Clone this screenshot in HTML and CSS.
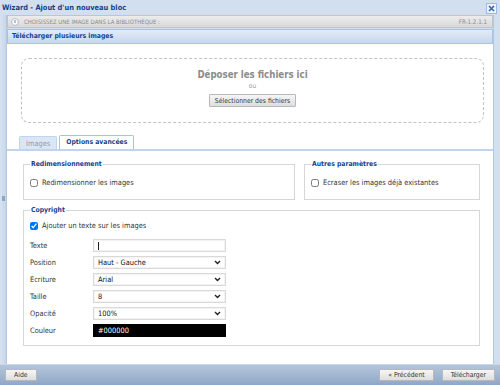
FILE: index.html
```html
<!DOCTYPE html>
<html lang="fr">
<head>
    <meta charset="UTF-8">
    <title>Wizard - Ajout d'un nouveau bloc</title>
    <link rel="stylesheet" href="styles.css">
</head>
<body>
    <div class="window">
        <div class="titlebar">
            <span class="title">Wizard - Ajout d'un nouveau bloc</span>
            <span class="close">
                <svg width="7" height="7" viewBox="0 0 7 7"><path d="M1 1 L6 6 M6 1 L1 6" stroke="#3a64a8" stroke-width="1.6"/></svg>
            </span>
        </div>

        <div class="frame">
            <div class="side-left"><span class="grip"></span></div>
            <div class="center">
                <div class="libbar">
                    <span class="lib-title">
                        <svg class="lib-icon" width="8" height="8" viewBox="0 0 8 8"><circle cx="4" cy="4" r="3.4" fill="#fff" stroke="#9ab0cc" stroke-width="0.8"/><rect x="3.5" y="2" width="1" height="3" fill="#6b88b3"/></svg>
                        CHOISISSEZ UNE IMAGE DANS LA BIBLIOTHÈQUE :
                    </span>
                    <span class="version">FR-1.2.1.1</span>
                </div>

                <div class="panel-header">Télécharger plusieurs images</div>

                <div class="panel-body">
                    <div class="dropzone">
                        <div class="drop-title">Déposer les fichiers ici</div>
                        <div class="drop-or">ou</div>
                        <button class="btn btn-select">Sélectionner des fichiers</button>
                    </div>

                    <div class="tabs">
                        <span class="tab">Images</span>
                        <span class="tab active">Options avancées</span>
                    </div>

                    <div class="options">
                        <div class="row-fieldsets">
                            <fieldset class="group group-resize">
                                <legend>Redimensionnement</legend>
                                <label class="check"><input type="checkbox"> Redimensionner les images</label>
                            </fieldset>
                            <fieldset class="group group-other">
                                <legend>Autres paramètres</legend>
                                <label class="check"><input type="checkbox"> Ecraser les images déjà existantes</label>
                            </fieldset>
                        </div>

                        <fieldset class="group group-copyright">
                            <legend>Copyright</legend>
                            <label class="check"><input type="checkbox" checked> Ajouter un texte sur les images</label>

                            <div class="form-grid">
                                <span class="label">Texte</span>
                                <div class="field text-field"><span class="caret"></span></div>

                                <span class="label">Position</span>
                                <div class="field select">Haut - Gauche<svg class="chev" width="7" height="5" viewBox="0 0 7 5"><path d="M1 1 L3.5 3.5 L6 1" fill="none" stroke="#222" stroke-width="1.4"/></svg></div>

                                <span class="label">Ecriture</span>
                                <div class="field select">Arial<svg class="chev" width="7" height="5" viewBox="0 0 7 5"><path d="M1 1 L3.5 3.5 L6 1" fill="none" stroke="#222" stroke-width="1.4"/></svg></div>

                                <span class="label">Taille</span>
                                <div class="field select">8<svg class="chev" width="7" height="5" viewBox="0 0 7 5"><path d="M1 1 L3.5 3.5 L6 1" fill="none" stroke="#222" stroke-width="1.4"/></svg></div>

                                <span class="label">Opacité</span>
                                <div class="field select">100%<svg class="chev" width="7" height="5" viewBox="0 0 7 5"><path d="M1 1 L3.5 3.5 L6 1" fill="none" stroke="#222" stroke-width="1.4"/></svg></div>

                                <span class="label">Couleur</span>
                                <div class="field color-field">#000000</div>
                            </div>
                        </fieldset>
                    </div>
                </div>
            </div>
            <div class="side-right"></div>
        </div>

        <div class="footer">
            <button class="btn btn-help">Aide</button>
            <div class="footer-right">
                <button class="btn">« Précédent</button>
                <button class="btn">Télécharger</button>
            </div>
        </div>
    </div>
</body>
</html>
```

FILE: styles.css
```css
body {
    margin: 0;
    font-family: "DejaVu Sans Condensed", "Liberation Sans", sans-serif;
    font-size: 7.4px;
    line-height: 9px;
    color: #222;
    background: #d2dfee;
}

.window {
    height: 385px;
    display: flex;
    flex-direction: column;
    overflow: hidden;
}

.titlebar {
    height: 15px;
    display: flex;
    align-items: center;
    justify-content: space-between;
    padding: 0 3px 0 2px;
    background: #d2dfee;
}

.title {
    font-size: 7.4px;
    font-weight: bold;
    color: #15428b;
}

.close {
    width: 9px;
    height: 9px;
    margin-top: 2px;
    border: 1px solid #99bbe8;
    background: #eef3fa;
    display: flex;
    align-items: center;
    justify-content: center;
}

.frame {
    flex: 1;
    display: flex;
    min-height: 0;
}

.side-left {
    width: 6px;
    background: linear-gradient(90deg, #d8e3f1, #c6d6eb);
    border-right: 1px solid #b3c7e1;
    display: flex;
    align-items: center;
    justify-content: center;
}

.grip {
    width: 3px;
    height: 5px;
    margin-top: 18px;
    background: #8ea6c6;
}

.side-right {
    width: 6px;
    background: #d2dfee;
    border-left: 1px solid #b3c7e1;
}

.center {
    flex: 1;
    display: flex;
    flex-direction: column;
    min-width: 0;
}

.libbar {
    height: 11px;
    display: flex;
    align-items: center;
    justify-content: space-between;
    padding: 0 5px 0 3px;
    background: linear-gradient(#ececec, #d9d9d9);
    border: 1px solid #c4c4c4;
    color: #8a8a8a;
    font-size: 6px;
}

.lib-title {
    display: flex;
    align-items: center;
    gap: 5px;
}

.version {
    font-size: 6.2px;
}

.panel-header {
    height: 13px;
    margin-top: 1px;
    padding: 0 4px;
    display: flex;
    align-items: center;
    background: linear-gradient(#e3ebf7, #c7d8ef);
    border: 1px solid #a9c1e2;
    font-size: 6.8px;
    font-weight: bold;
    color: #15428b;
}

.panel-body {
    flex: 1;
    background: #fff;
    display: flex;
    flex-direction: column;
}

.dropzone {
    height: 65px;
    box-sizing: border-box;
    margin: 14px 9px 0 14px;
    padding-top: 10px;
    border: 1px dashed #c2c2c2;
    border-radius: 8px;
    display: flex;
    flex-direction: column;
    align-items: center;
}

.drop-title {
    font-size: 9.6px;
    line-height: 12px;
    font-weight: bold;
    color: #8c8c8c;
}

.drop-or {
    font-size: 6.5px;
    color: #999;
    margin-top: 1px;
}

.btn {
    font-family: inherit;
    font-size: 6.8px;
    color: #333;
    height: 12px;
    padding: 0 5px;
    border: 1px solid #b8b8b8;
    border-radius: 1px;
    background: linear-gradient(#f6f6f6, #dedede);
    cursor: pointer;
}

.btn-select {
    margin-top: 3px;
    height: 13px;
}

.tabs {
    margin-top: 12px;
    padding-left: 12px;
    display: flex;
    gap: 2px;
    border-bottom: 2px solid #c1d4ee;
    height: 14px;
    align-items: flex-end;
}

.tab {
    height: 12px;
    display: flex;
    align-items: center;
    padding: 0 6px;
    border: 1px solid #c1d4ee;
    border-bottom: none;
    border-radius: 2px 2px 0 0;
    background: #dbe6f4;
    color: #8a9bb3;
}

.tab.active {
    height: 13px;
    background: #fff;
    color: #15428b;
    font-size: 6.8px;
    font-weight: bold;
    border-color: #a9c1e2;
}

.options {
    padding: 9px 13px 0 16px;
    display: flex;
    flex-direction: column;
    gap: 6px;
}

.row-fieldsets {
    display: flex;
    gap: 9px;
}

.group {
    margin: 0;
    border: 1px solid #d6d6d6;
    padding: 9px 6px 12px;
}

.group legend {
    font-size: 6.8px;
    font-weight: bold;
    color: #15428b;
    padding: 0 1px;
}

.group-resize {
    width: 272px;
    box-sizing: border-box;
}

.group-other {
    flex: 1;
}

.check {
    display: flex;
    align-items: center;
    gap: 4px;
    color: #333;
}

.check input {
    width: 8px;
    height: 8px;
    margin: 0;
}

.group-copyright {
    padding: 6px 6px 8px;
}

.form-grid {
    display: grid;
    grid-template-columns: 63px 133px;
    row-gap: 4px;
    margin-top: 9px;
    align-items: center;
}

.label {
    color: #333;
}

.field {
    height: 13px;
    box-sizing: border-box;
    border: 1px solid #d9d9d9;
    background: #fff;
    display: flex;
    align-items: center;
    padding: 0 4px;
    color: #111;
    box-shadow: inset 0 0 0 1px #f3f3f3;
}

.select {
    justify-content: space-between;
}

.chev {
    flex: none;
}

.caret {
    width: 1px;
    height: 8px;
    background: #222;
}

.color-field {
    background: #000;
    border-color: #000;
    color: #fff;
    box-shadow: none;
}

.footer {
    height: 20px;
    display: flex;
    align-items: center;
    justify-content: space-between;
    padding: 0 5px;
    background: linear-gradient(#b4c6dc, #8fa7c6);
    border-top: 1px solid #c8d6e8;
}

.footer .btn {
    height: 12px;
    padding: 0 8px;
}

.footer .btn-help {
    min-width: 30px;
}

.footer-right {
    display: flex;
    gap: 8px;
}
```
